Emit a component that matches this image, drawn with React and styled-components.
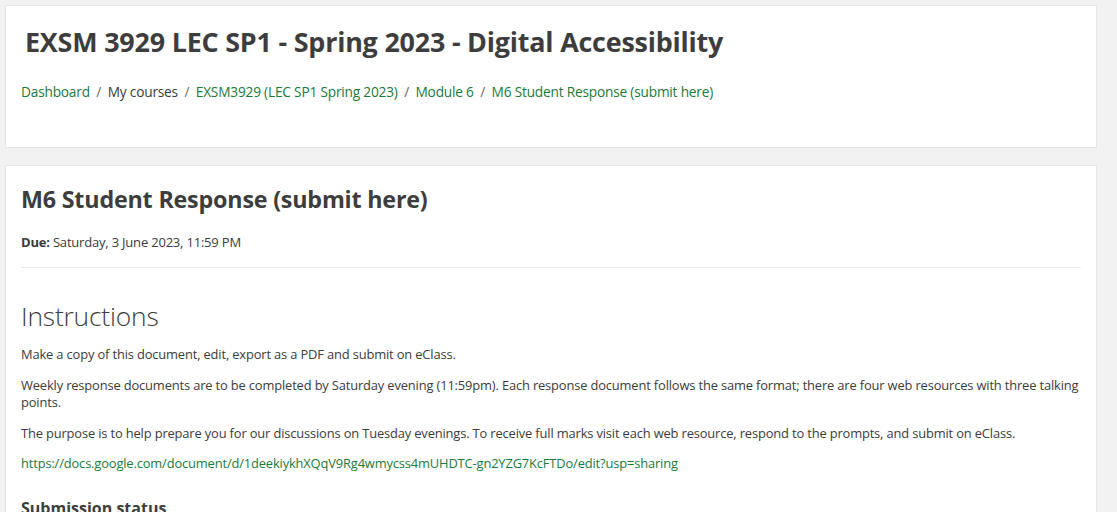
import React from 'react'
import styled, { createGlobalStyle } from 'styled-components'

const GlobalStyle = createGlobalStyle`
  html, body {
    margin: 0;
    padding: 0;
    background: #f2f2f2;
  }
  body {
    font-family: 'Open Sans', 'Noto Sans', sans-serif;
    color: #3b3b3b;
    -webkit-font-smoothing: antialiased;
  }
`

const Page = styled.div`
  width: 1092px;
  padding: 5px 0 0 5px;
  display: flex;
  flex-direction: column;
  gap: 17px;
`

const Card = styled.section`
  background: #fff;
  border: 1px solid #e6e6e6;
  padding: ${(p) => p.$pad || '15px'};
  min-height: ${(p) => p.$minHeight || 'auto'};
  box-sizing: border-box;
`

const CourseTitle = styled.h1`
  margin: 0 0 0 4px;
  font-size: 26.9px;
  font-weight: 700;
  line-height: 42px;
  color: #3d3d3d;
  letter-spacing: -0.2px;
`

const Crumbs = styled.nav`
  display: flex;
  align-items: center;
  margin-top: 19px;
  font-size: 13.7px;
  letter-spacing: -0.2px;
  line-height: 20px;
`

const Crumb = styled.span`
  color: ${(p) => (p.$link ? '#1a7a3c' : '#3b3b3b')};
`

const Sep = styled.span`
  color: #6a6a6a;
  padding: 0 6.5px;
`

const ActivityTitle = styled.h2`
  margin: 0;
  font-size: 23.3px;
  font-weight: 700;
  line-height: 36px;
  color: #3d3d3d;
  letter-spacing: -0.2px;
`

const Due = styled.div`
  margin-top: 16px;
  font-size: 13px;
  line-height: 18px;
  letter-spacing: -0.2px;
  padding-bottom: 16px;
  border-bottom: 1px solid #ececec;

  strong {
    font-weight: 700;
  }
`

const SectionHeading = styled.h3`
  margin: 30px 0 12px;
  font-size: 26.4px;
  font-weight: 300;
  line-height: 36px;
  color: #3d3d3d;
  letter-spacing: -0.2px;
`

const Para = styled.p`
  margin: 0 0 13px;
  font-size: 12.9px;
  line-height: 17.5px;
  letter-spacing: -0.15px;
  color: ${(p) => (p.$link ? '#1a7a3c' : '#3b3b3b')};
`

const SubHeading = styled.h4`
  margin: 23px 0 0;
  font-size: 16px;
  font-weight: 700;
  line-height: 24px;
  color: #3d3d3d;
`

const crumbs = [
  { label: 'Dashboard', link: true },
  { label: 'My courses', link: false },
  { label: 'EXSM3929 (LEC SP1 Spring 2023)', link: true },
  { label: 'Module 6', link: true },
  { label: 'M6 Student Response (submit here)', link: true },
]

export default function App() {
  return (
    <>
      <GlobalStyle />
      <Page>
        <Card $pad="15px" $minHeight="143px">
          <CourseTitle>EXSM 3929 LEC SP1 - Spring 2023 - Digital Accessibility</CourseTitle>
          <Crumbs>
            {crumbs.map((c, i) => (
              <React.Fragment key={c.label}>
                {i > 0 && <Sep>/</Sep>}
                <Crumb $link={c.link}>{c.label}</Crumb>
              </React.Fragment>
            ))}
          </Crumbs>
        </Card>
        <Card $pad="15px 15px 40px">
          <ActivityTitle>M6 Student Response (submit here)</ActivityTitle>
          <Due>
            <strong>Due:</strong> Saturday, 3 June 2023, 11:59 PM
          </Due>
          <SectionHeading>Instructions</SectionHeading>
          <Para>Make a copy of this document, edit, export as a PDF and submit on eClass.</Para>
          <Para>
            Weekly response documents are to be completed by Saturday evening (11:59pm). Each response
            document follows the same format; there are four web resources with three talking points.
          </Para>
          <Para>
            The purpose is to help prepare you for our discussions on Tuesday evenings. To receive full
            marks visit each web resource, respond to the prompts, and submit on eClass.
          </Para>
          <Para $link>https://docs.google.com/document/d/1deekiykhXQqV9Rg4wmycss4mUHDTC-gn2YZG7KcFTDo/edit?usp=sharing</Para>
          <SubHeading>Submission status</SubHeading>
        </Card>
      </Page>
    </>
  )
}
